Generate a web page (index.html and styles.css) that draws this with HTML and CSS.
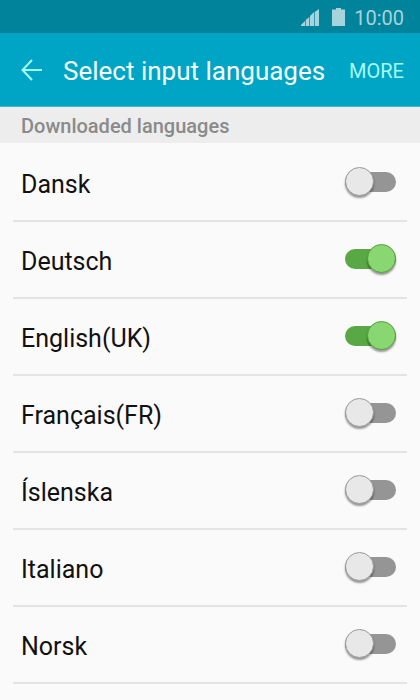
FILE: index.html
```html
<!DOCTYPE html>
<html lang="en">
<head>
<meta charset="utf-8">
<meta name="viewport" content="width=device-width, initial-scale=1">
<title>Select input languages</title>
<link rel="stylesheet" href="styles.css">
</head>
<body>
<div class="status">
  <svg class="signal" width="18" height="18" viewBox="0 0 18 18" aria-hidden="true">
    <path d="M0 18v-1l4-4v5zM4.700 18v-6l3.600-3v9zM9 18V8l4-4v14zM13.700 18V4l4.300-3v17z"/>
  </svg>
  <svg class="battery" width="13" height="18" viewBox="0 0 13 18" aria-hidden="true">
    <path d="M4 0h5v1.500h4V18H0V1.500h4z"/>
  </svg>
  <time class="clock">10:00</time>
</div>
<header class="bar">
  <button class="back" type="button" aria-label="Back">
    <svg width="21" height="22" viewBox="0 0 21 22" aria-hidden="true">
      <path d="M11 1L1.500 11L11 21M1.500 11H21"/>
    </svg>
  </button>
  <h1 class="title">Select input languages</h1>
  <button class="more" type="button">MORE</button>
</header>
<main>
  <h2 class="section">Downloaded languages</h2>
  <ul class="list">
    <li class="row"><label class="name" for="da">Dansk</label><input class="toggle" type="checkbox" id="da"></li>
    <li class="row"><label class="name" for="de">Deutsch</label><input class="toggle" type="checkbox" id="de" checked></li>
    <li class="row"><label class="name" for="en">English(UK)</label><input class="toggle" type="checkbox" id="en" checked></li>
    <li class="row"><label class="name" for="fr">Français(FR)</label><input class="toggle" type="checkbox" id="fr"></li>
    <li class="row"><label class="name" for="is">Íslenska</label><input class="toggle" type="checkbox" id="is"></li>
    <li class="row"><label class="name" for="it">Italiano</label><input class="toggle" type="checkbox" id="it"></li>
    <li class="row"><label class="name" for="no">Norsk</label><input class="toggle" type="checkbox" id="no"></li>
  </ul>
</main>
</body>
</html>
```
FILE: styles.css
```css
*,
*::before {
  box-sizing: border-box;
}

body {
  margin: 0;
  background: #fafafa;
  color: #111;
  font-family: Roboto, "Liberation Sans", sans-serif;
}

button {
  border: 0;
  padding: 0;
  background: none;
  font: inherit;
}

.status {
  display: flex;
  align-items: center;
  justify-content: flex-end;
  height: 33px;
  padding-right: 16px;
  background: #00839b;
  color: #a6d3dc;
}

.status svg {
  fill: #a6d3dc;
}

.signal {
  margin-right: 13px;
}

.battery {
  margin-right: 9px;
}

.clock {
  padding-top: 2px;
  font-size: 20px;
  line-height: 24px;
}

.bar {
  display: flex;
  align-items: center;
  height: 74px;
  padding: 0 16px 0 21px;
  background: #00a5c5;
  border-bottom: 1px solid #4fb3c8;
}

.back {
  display: flex;
  margin-right: 21px;
}

.back svg {
  fill: none;
  stroke: #a4fcf5;
  stroke-width: 2;
}

.title {
  flex: 1;
  margin: 0;
  padding-top: 2px;
  color: #f5ffff;
  font-size: 26px;
  font-weight: 400;
  line-height: 32px;
  white-space: nowrap;
}

.more {
  padding-top: 2px;
  color: #a4fcf5;
  font-size: 20px;
  line-height: 24px;
}

.section {
  margin: 0;
  padding: 7px 21px 5px;
  background: #ededed;
  color: #8a8a8a;
  font-size: 20px;
  font-weight: 500;
  line-height: 24px;
}

.list {
  margin: 0;
  padding: 2px 13px 0;
  list-style: none;
}

.row {
  display: flex;
  align-items: center;
  height: 77px;
  padding: 0 11px 2px 8px;
  border-bottom: 2px solid #e4e4e4;
}

.name {
  flex: 1;
  padding-top: 6px;
  font-size: 25px;
  line-height: 32px;
}

.toggle {
  position: relative;
  appearance: none;
  width: 51px;
  height: 20px;
  margin: 0;
  border-radius: 10px;
  background: #959595;
}

.toggle::before {
  content: "";
  position: absolute;
  top: -5px;
  left: 0;
  width: 29px;
  height: 29px;
  border: 1px solid #9b9b9b;
  border-radius: 50%;
  background: #e8e8e8;
  box-shadow: 0 2px 2px rgba(0, 0, 0, 0.4);
}

.toggle:checked {
  background: #5aa845;
}

.toggle:checked::before {
  right: 0;
  left: auto;
  border-color: #58a044;
  background: #89d770;
}
```
